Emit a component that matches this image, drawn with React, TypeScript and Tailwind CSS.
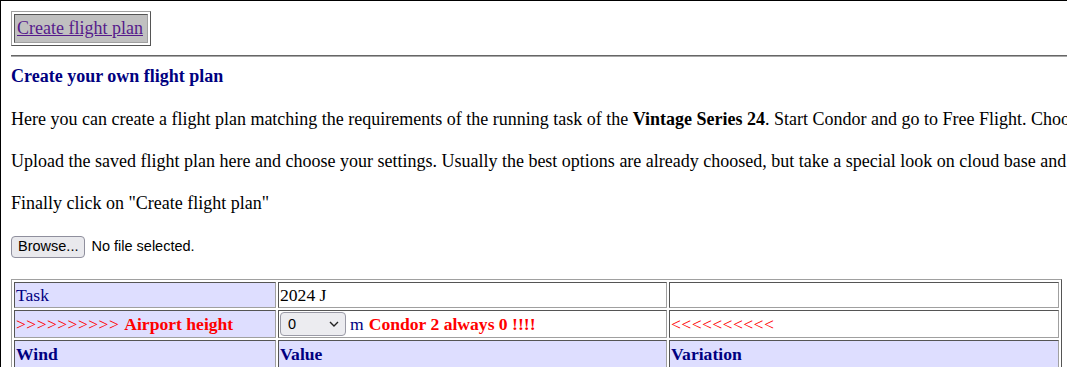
import React from "react";

function Cell({
  children,
  bg = "white",
  className = "",
}: {
  children?: React.ReactNode;
  bg?: "white" | "lav";
  className?: string;
}) {
  return (
    <div
      className={
        "border border-t-[#555555] border-l-[#555555] border-b-[#a0a0a0] border-r-[#a0a0a0] px-[1px] flex items-center whitespace-nowrap overflow-hidden " +
        (bg === "lav" ? "bg-[#dedeff] " : "bg-white ") +
        className
      }
    >
      {children}
    </div>
  );
}

export default function App() {
  return (
    <div className="w-[1067px] h-[367px] overflow-hidden bg-white">
      <div className="w-[1200px] h-[420px] border-l border-t border-black pl-[10px] pt-[10px] font-['Liberation_Serif',serif] text-black">
        {/* header link box */}
        <div className="flex">
          <div className="border border-t-[#a0a0a0] border-l-[#a0a0a0] border-b-[#555555] border-r-[#555555] p-[2px]">
            <div className="h-[29px] border border-t-[#555555] border-l-[#555555] border-b-[#a0a0a0] border-r-[#a0a0a0] bg-[#c0c0c0] pl-[2px] pr-[4px] flex items-center">
              <a href="#" className="text-[18px] leading-[21px] text-[#551a8b] underline">
                Create flight plan
              </a>
            </div>
          </div>
        </div>

        {/* hr */}
        <div className="mt-[9px] h-[2px] border-t border-t-[#666666] border-b border-b-[#a8a8a8]" />

        <div className="mt-[9px] text-[18px] leading-[21px] font-bold text-[#000080]">
          Create your own flight plan
        </div>

        <p className="mt-[21px] text-[18px] leading-[22px] whitespace-nowrap">
          Here you can create a flight plan matching the requirements of the running task of the{" "}
          <b>Vintage Series 24</b>. Start Condor and go to Free Flight. Choose the task and save the flight plan.
        </p>
        <p className="mt-[20px] text-[18px] leading-[22px] whitespace-nowrap">
          Upload the saved flight plan here and choose your settings. Usually the best options are already choosed, but take a special look on cloud base and wind.
        </p>
        <p className="mt-[20px] text-[18px] leading-[22px] whitespace-nowrap">
          Finally click on "Create flight plan"
        </p>

        {/* file input */}
        <div className="mt-[22px] flex items-center h-[22px] font-['Liberation_Sans',Arial,sans-serif] text-[14.5px]">
          <div className="h-[22px] px-[6px] flex items-center rounded-[4px] border border-[#8f8f9d] bg-[#e9e9ed] text-black">
            Browse...
          </div>
          <span className="ml-[6px] text-black">No file selected.</span>
        </div>

        {/* table */}
        <div className="mt-[21px] w-[1051px] border border-t-[#a0a0a0] border-l-[#a0a0a0] border-b-[#555555] border-r-[#555555] p-[2px] grid grid-cols-[262px_389px_390px] auto-rows-min gap-[2px] text-[17.6px] leading-[20px]">
          <Cell bg="lav" className="h-[26px] text-[#000080]">Task</Cell>
          <Cell className="h-[26px]">2024 J</Cell>
          <Cell className="h-[26px]" />

          <Cell bg="lav" className="h-[28px] text-[#ff0000]">
            <span className="tracking-[0.4px]">&gt;&gt;&gt;&gt;&gt;&gt;&gt;&gt;&gt;&gt;</span>
            <b className="ml-[5px]">Airport height</b>
          </Cell>
          <Cell className="h-[28px]">
            <div className="h-[24px] w-[66px] rounded-[4px] border border-[#9a9aa6] bg-[#ececf0] flex items-center justify-between pl-[7px] pr-[6px] font-['Liberation_Sans',Arial,sans-serif] text-[14.5px]">
              <span>0</span>
              <svg width="10" height="6" viewBox="0 0 10 6" fill="none">
                <path d="M1 1L5 5L9 1" stroke="#222" strokeWidth="1.4" />
              </svg>
            </div>
            <span className="ml-[4px] text-[#000080]">m</span>
            <b className="ml-[5px] text-[#ff0000]">Condor 2 always 0 !!!!</b>
          </Cell>
          <Cell className="h-[28px] text-[#ff0000]">
            <span className="tracking-[0.4px]">&lt;&lt;&lt;&lt;&lt;&lt;&lt;&lt;&lt;&lt;</span>
          </Cell>

          <Cell bg="lav" className="h-[28px] font-bold text-[#000080]">Wind</Cell>
          <Cell bg="lav" className="h-[28px] font-bold text-[#000080]">Value</Cell>
          <Cell bg="lav" className="h-[28px] font-bold text-[#000080]">Variation</Cell>
        </div>
      </div>
    </div>
  );
}
